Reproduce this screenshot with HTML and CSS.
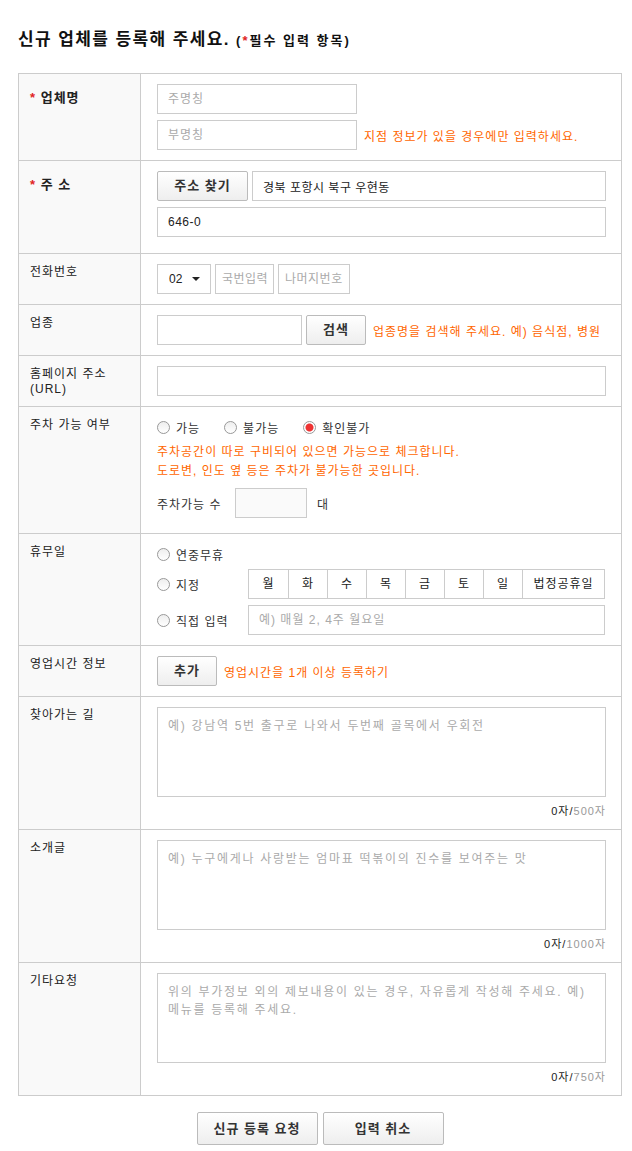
FILE: index.html
```html
<!DOCTYPE html>
<html>
<head>
	<meta charset="UTF-8">
	<title>신규 업체 등록</title>
	<link rel="stylesheet" href="styles.css">
</head>
<body>
	<div class="reg-wrap">
		<h2 class="reg-title">신규 업체를 등록해 주세요. <small>(<em>*</em>필수 입력 항목)</small></h2>
		<table class="reg-form">
			<tr>
				<th class="req"><em>*</em> 업체명</th>
				<td>
					<div class="line"><input type="text" class="ipt w200" placeholder="주명칭"></div>
					<div class="line gap"><input type="text" class="ipt w200" placeholder="부명칭"><span class="note">지점 정보가 있을 경우에만 입력하세요.</span></div>
				</td>
			</tr>
			<tr>
				<th class="req"><em>*</em> 주 소</th>
				<td>
					<div class="line"><a href="javascript:;" class="btn w91">주소 찾기</a><input type="text" class="ipt w354 dark" value="경북 포항시 북구 우현동"></div>
					<div class="line gap pb6"><input type="text" class="ipt full dark" value="646-0"></div>
				</td>
			</tr>
			<tr>
				<th>전화번호</th>
				<td>
					<div class="line"><span class="sel">02<i class="arrow"></i></span><input type="text" class="ipt w59 c4" placeholder="국번입력"><input type="text" class="ipt w72 c4" placeholder="나머지번호"></div>
				</td>
			</tr>
			<tr>
				<th>업종</th>
				<td>
					<div class="line"><input type="text" class="ipt w145"><a href="javascript:;" class="btn w60">검색</a><span class="note">업종명을 검색해 주세요. 예) 음식점, 병원</span></div>
				</td>
			</tr>
			<tr>
				<th>홈페이지 주소<br>(URL)</th>
				<td>
					<div class="line"><input type="text" class="ipt full"></div>
				</td>
			</tr>
			<tr>
				<th>주차 가능 여부</th>
				<td>
					<div class="radios">
						<label><input type="radio" name="park">가능</label>
						<label><input type="radio" name="park">불가능</label>
						<label><input type="radio" name="park" checked>확인불가</label>
					</div>
					<p class="note-block">주차공간이 따로 구비되어 있으면 가능으로 체크합니다.<br>도로변, 인도 옆 등은 주차가 불가능한 곳입니다.</p>
					<div class="line park-num"><span class="park-label">주차가능 수</span><input type="text" class="ipt w72 grey"><span class="unit">대</span></div>
				</td>
			</tr>
			<tr>
				<th>휴무일</th>
				<td>
					<div class="radios"><label><input type="radio" name="off">연중무휴</label></div>
					<div class="line gap5">
						<label class="off-label"><input type="radio" name="off">지정</label>
						<ul class="days">
							<li>월</li><li>화</li><li>수</li><li>목</li><li>금</li><li>토</li><li>일</li><li class="holi">법정공휴일</li>
						</ul>
					</div>
					<div class="line gap">
						<label class="off-label"><input type="radio" name="off">직접 입력</label>
						<input type="text" class="ipt w357" placeholder="예) 매월 2, 4주 월요일">
					</div>
				</td>
			</tr>
			<tr>
				<th>영업시간 정보</th>
				<td>
					<div class="line"><a href="javascript:;" class="btn w60">추가</a><span class="note">영업시간을 1개 이상 등록하기</span></div>
				</td>
			</tr>
			<tr>
				<th>찾아가는 길</th>
				<td>
					<textarea class="txt" placeholder="예) 강남역 5번 출구로 나와서 두번째 골목에서 우회전"></textarea>
					<p class="count">0자/<span>500자</span></p>
				</td>
			</tr>
			<tr>
				<th>소개글</th>
				<td>
					<textarea class="txt" placeholder="예) 누구에게나 사랑받는 엄마표 떡볶이의 진수를 보여주는 맛"></textarea>
					<p class="count">0자/<span>1000자</span></p>
				</td>
			</tr>
			<tr>
				<th>기타요청</th>
				<td>
					<textarea class="txt" placeholder="위의 부가정보 외의 제보내용이 있는 경우, 자유롭게 작성해 주세요. 예) 메뉴를 등록해 주세요."></textarea>
					<p class="count">0자/<span>750자</span></p>
				</td>
			</tr>
		</table>
		<div class="reg-btns">
			<a href="javascript:;" class="btn big">신규 등록 요청</a><a href="javascript:;" class="btn big">입력 취소</a>
		</div>
	</div>
</body>
</html>
```

FILE: styles.css
```css
*{
	margin:0px;padding:0px;box-sizing:border-box;
}
body{
	font-family:"Liberation Sans","Noto Sans CJK KR",sans-serif;font-size:12px;color:#333;background:#fff;
	letter-spacing:1px;
}
.reg-wrap{
	width:622px;padding:30px 0 0 18px;
}
.reg-title{
	font-size:17px;color:#111;line-height:20px;height:43px;letter-spacing:1.4px;
}
.reg-title small{
	font-size:13px;letter-spacing:2px;
}
.reg-title em,.req em{
	color:#e02424;font-style:normal;
}
.reg-form{
	width:604px;border-collapse:collapse;border:1px solid #ccc;
}
.reg-form th{
	width:122px;background-color:#f9f9f9;text-align:left;vertical-align:top;font-weight:normal;
	padding:11px 0 0 11px;line-height:15px;color:#222;
	border-bottom:1px solid #ccc;border-right:1px solid #ccc;
}
.reg-form th.req{
	padding-top:16px;font-weight:bold;font-size:13px;
}
.reg-form td{
	padding:10px 15px 10px 16px;vertical-align:top;border-bottom:1px solid #ccc;
}
.line{
	display:flex;align-items:center;height:30px;
}
.gap{
	margin-top:6px;
}
.gap5{
	margin-top:5px;
}
.pb6{
	margin-bottom:6px;
}
.ipt{
	height:30px;border:1px solid #ccc;padding:0 10px;font-size:12px;outline:0;letter-spacing:1px;
	font-family:"Liberation Sans","Noto Sans CJK KR",sans-serif;color:#333;background:#fff;
}
.ipt::placeholder,.txt::placeholder{
	color:#aaa;
}
.ipt.dark{
	color:#222;letter-spacing:0.5px;
}
.ipt.c4{
	padding:0 6px;margin-left:4px;letter-spacing:0.5px;
}
.ipt.grey{
	background:#fafafa;
}
.w200{width:200px;}
.w354{width:354px;margin-left:4px;}
.w59{width:59px;}
.w72{width:72px;}
.w145{width:145px;}
.w357{width:357px;}
.full{width:449px;}
.btn{
	display:inline-block;height:30px;line-height:28px;text-align:center;text-decoration:none;
	border:1px solid #bbb;border-radius:2px;color:#333;font-weight:bold;font-size:13px;
	background:linear-gradient(#fff,#eee);letter-spacing:1px;
}
.w91{width:91px;}
.w60{width:60px;}
.line .w60{margin-left:4px;}
.line .w60:first-child{margin-left:0;}
.note{
	color:#f60;margin-left:7px;
}
.sel{
	display:flex;align-items:center;width:54px;height:30px;border:1px solid #ccc;padding-left:11px;color:#222;
	letter-spacing:0;
}
.arrow{
	width:0;height:0;border-left:4px solid transparent;border-right:4px solid transparent;border-top:4px solid #222;
	margin-left:10px;
}
.radios{
	display:flex;align-items:center;height:20px;
}
.radios label,.off-label{
	display:flex;align-items:center;margin-right:24px;color:#333;
}
.off-label{
	width:91px;margin-right:0;
}
input[type=radio]{
	-webkit-appearance:none;appearance:none;width:13px;height:13px;border:1px solid #999;border-radius:50%;
	background:linear-gradient(#eee,#fff);margin-right:6px;outline:0;
}
input[type=radio]:checked{
	background:radial-gradient(circle,#e33 0,#e33 3.5px,#fff 4.5px);border-color:#999;
}
.note-block{
	color:#f60;line-height:19px;margin-top:6px;
}
.park-num{
	margin-top:7px;margin-bottom:5px;
}
.park-label{
	width:78px;
}
.unit{
	margin-left:10px;
}
.days{
	display:flex;list-style:none;border:1px solid #ccc;height:30px;width:357px;
}
.days li{
	width:39px;line-height:28px;text-align:center;border-left:1px solid #ccc;color:#222;
}
.days li:first-child{
	border-left:0;
}
.days li.holi{
	flex:1;
}
.txt{
	display:block;width:449px;height:90px;border:1px solid #ccc;padding:9px 10px;resize:none;outline:0;
	font-family:"Liberation Sans","Noto Sans CJK KR",sans-serif;font-size:12px;line-height:18px;color:#333;
	letter-spacing:1.7px;
}
.count{
	text-align:right;margin-top:6px;line-height:16px;font-size:11px;color:#222;
}
.count span{
	color:#999;
}
.reg-btns{
	display:flex;justify-content:center;gap:5px;width:604px;margin-top:16px;
}
.btn.big{
	width:121px;height:33px;line-height:31px;
}
```
